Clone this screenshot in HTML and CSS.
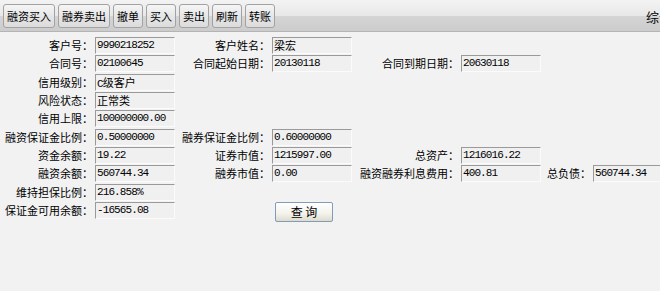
FILE: index.html
```html
<!DOCTYPE html>
<html lang="zh-CN">
<head>
    <meta charset="UTF-8">
    <title>综合信息</title>
    <link rel="stylesheet" href="styles.css">
</head>
<body>
    <div class="toolbar">
        <button class="tb-btn">融资买入</button>
        <button class="tb-btn">融券卖出</button>
        <button class="tb-btn">撤单</button>
        <button class="tb-btn">买入</button>
        <button class="tb-btn">卖出</button>
        <button class="tb-btn">刷新</button>
        <button class="tb-btn">转账</button>
        <span class="tb-title">综合信息</span>
    </div>

    <div class="form">
        <div class="row">
            <label>客户号：</label><span class="field">9990218252</span>
            <label>客户姓名：</label><span class="field"><span class="han">梁宏</span></span>
        </div>
        <div class="row">
            <label>合同号：</label><span class="field">02100645</span>
            <label>合同起始日期：</label><span class="field">20130118</span>
            <label>合同到期日期：</label><span class="field">20630118</span>
        </div>
        <div class="row">
            <label>信用级别：</label><span class="field">C<span class="han">级客户</span></span>
        </div>
        <div class="row">
            <label>风险状态：</label><span class="field"><span class="han">正常类</span></span>
        </div>
        <div class="row">
            <label>信用上限：</label><span class="field">100000000.00</span>
        </div>
        <div class="row">
            <label>融资保证金比例：</label><span class="field">0.50000000</span>
            <label>融券保证金比例：</label><span class="field">0.60000000</span>
        </div>
        <div class="row">
            <label>资金余额：</label><span class="field">19.22</span>
            <label>证券市值：</label><span class="field">1215997.00</span>
            <label>总资产：</label><span class="field">1216016.22</span>
        </div>
        <div class="row">
            <label>融资余额：</label><span class="field">560744.34</span>
            <label>融券市值：</label><span class="field">0.00</span>
            <label>融资融券利息费用：</label><span class="field">400.81</span>
            <label>总负债：</label><span class="field">560744.34</span>
        </div>
        <div class="row">
            <label>维持担保比例：</label><span class="field">216.858%</span>
        </div>
        <div class="row">
            <label>保证金可用余额：</label><span class="field">-16565.08</span>
            <div class="query-cell"><button class="btn-query">查 询</button></div>
        </div>
    </div>
</body>
</html>
```

FILE: styles.css
```css
* {
    margin: 0;
    padding: 0;
    box-sizing: border-box;
}

html, body {
    overflow: hidden;
}

body {
    font-family: "Noto Sans CJK SC", sans-serif;
    font-size: 11px;
    color: #000;
    background-color: #f2f2f2;
    width: 660px;
    height: 291px;
}

/* 工具栏 */
.toolbar {
    height: 32px;
    display: flex;
    align-items: flex-start;
    gap: 3px;
    padding: 4px 0 0 3px;
    white-space: nowrap;
    overflow: hidden;
    background: linear-gradient(#f3f3f3 0%, #e8e8e8 50%, #d5d5d5 52%, #cccccc 100%);
    border-bottom: 1px solid #b4b4b4;
}

.tb-btn {
    flex-shrink: 0;
    height: 24px;
    padding: 0 3px;
    font-family: inherit;
    font-size: 11px;
    color: #000;
    border: 1px solid #a2a2a2;
    border-radius: 3px;
    background: linear-gradient(#f6f6f6, #e6e6e6 50%, #dcdcdc 100%);
}

.tb-title {
    flex-shrink: 0;
    margin-left: 368px;
    font-size: 13px;
    line-height: 26px;
}

/* 表单 */
.form {
    display: flex;
    flex-direction: column;
    gap: 1.33px;
    padding-top: 5px;
}

.row {
    display: grid;
    grid-template-columns: 95px 80px 97px 80px 109px 80px 52px 80px;
    height: 17px;
}

.row label {
    text-align: right;
    padding-right: 2px;
    line-height: 17px;
    white-space: nowrap;
}

.field {
    height: 17px;
    padding-left: 1px;
    font-family: "Liberation Mono", "Noto Sans CJK SC", monospace;
    font-size: 11px;
    letter-spacing: -0.9px;
    line-height: 15px;
    white-space: nowrap;
    overflow: hidden;
    background-color: #f0f0f0;
    border: 1px solid #fbfbfb;
    border-top-color: #9a9a9a;
    border-left-color: #9a9a9a;
}

.han {
    font-family: "Noto Sans CJK SC", sans-serif;
    letter-spacing: 0;
}

.query-cell {
    grid-column: 4;
    padding-left: 3px;
}

.btn-query {
    width: 58px;
    height: 20px;
    margin-top: 0;
    font-family: inherit;
    font-size: 12px;
    color: #000;
    border: 1px solid #7f9db9;
    border-radius: 2px;
    background: linear-gradient(#ffffff, #f3f2ec 60%, #dedbcc 100%);
}
```
